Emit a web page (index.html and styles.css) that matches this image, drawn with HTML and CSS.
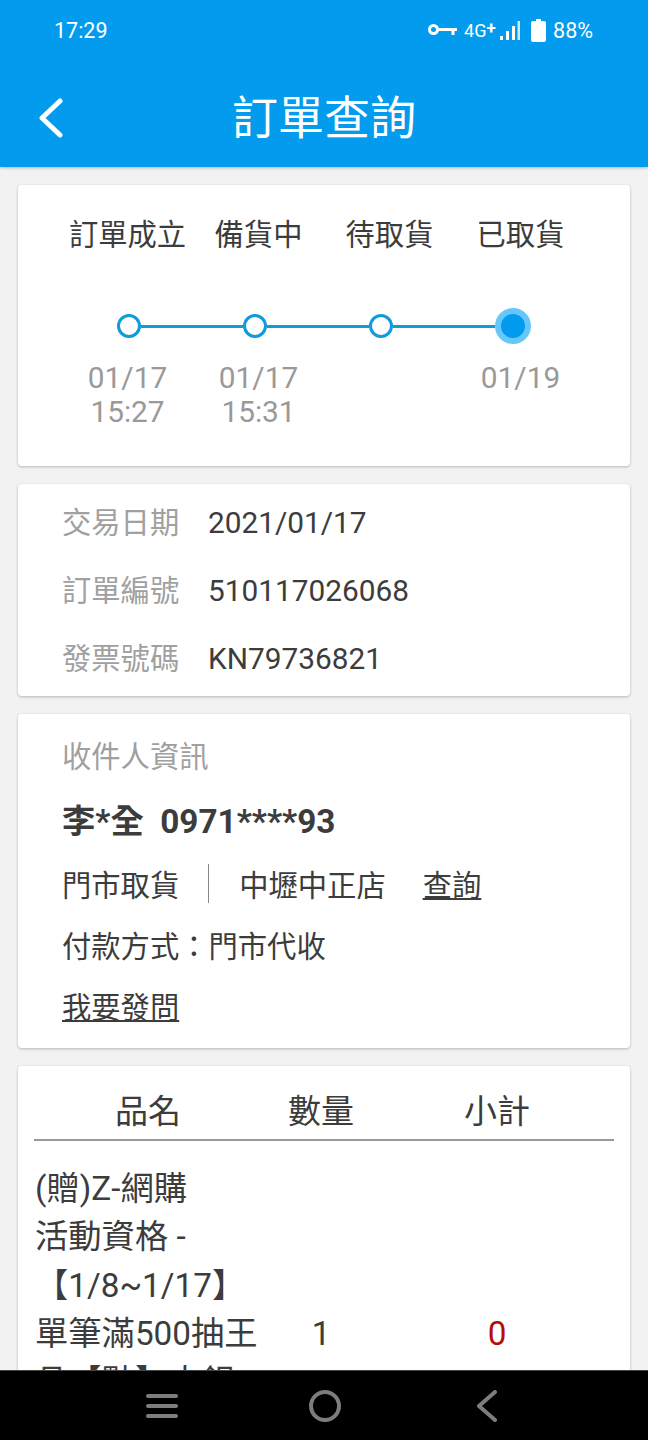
FILE: index.html
```html
<!DOCTYPE html>
<html lang="zh-Hant">
<head>
<meta charset="utf-8">
<title>訂單查詢</title>
<link rel="stylesheet" href="styles.css">
</head>
<body>
<header class="appbar">
  <div class="status">
    <span class="clock">17:29</span>
    <div class="status-right">
      <svg class="key" viewBox="0 0 29 12" width="29" height="12"><circle cx="5.500" cy="5.500" r="4" fill="none" stroke="#fff" stroke-width="3"/><path d="M9.500 4H29V7H26.500V11H23.500V7H9.500Z" fill="#fff"/></svg>
      <span class="net">4G<b class="plus">+</b></span>
      <svg class="bars" viewBox="0 0 20 19" width="20" height="19"><rect x="0" y="15" width="3" height="4" fill="#fff"/><rect x="6" y="10" width="3" height="9" fill="#fff"/><rect x="12" y="5" width="3" height="14" fill="#fff"/><rect x="17.500" y="0" width="2.500" height="19" fill="#cfe9fb"/></svg>
      <svg class="batt" viewBox="0 0 15 23" width="15" height="23"><path d="M5 0H10V2H13Q15 2 15 4V21Q15 23 13 23H2Q0 23 0 21V4Q0 2 2 2H5Z" fill="#fff"/></svg>
      <span class="pct">88%</span>
    </div>
  </div>
  <div class="titlebar">
    <svg class="back" viewBox="0 0 26 40" width="26" height="40"><path d="M22 3L4 20L22 37" fill="none" stroke="#fff" stroke-width="5" stroke-linecap="round" stroke-linejoin="round"/></svg>
    <h1 class="title">訂單查詢</h1>
  </div>
</header>

<main class="content">
  <section class="card progress">
    <div class="steps">
      <span class="step">訂單成立</span>
      <span class="step">備貨中</span>
      <span class="step">待取貨</span>
      <span class="step">已取貨</span>
    </div>
    <div class="track">
      <span class="dot"></span>
      <span class="link"></span>
      <span class="dot"></span>
      <span class="link"></span>
      <span class="dot"></span>
      <span class="link"></span>
      <span class="dot dot-active"></span>
    </div>
    <div class="dates">
      <span class="date">01/17<br>15:27</span>
      <span class="date">01/17<br>15:31</span>
      <span class="date"></span>
      <span class="date">01/19</span>
    </div>
  </section>

  <section class="card info">
    <div class="info-row"><span class="label">交易日期</span><span class="latin">2021/01/17</span></div>
    <div class="info-row"><span class="label">訂單編號</span><span class="latin">510117026068</span></div>
    <div class="info-row"><span class="label">發票號碼</span><span class="latin">KN79736821</span></div>
  </section>

  <section class="card receiver">
    <div class="label">收件人資訊</div>
    <div class="name">李*全&nbsp; 0971****93</div>
    <div class="pickup">
      <span class="pickup-type">門市取貨</span>
      <span class="pickup-sep"></span>
      <span class="pickup-store">中壢中正店</span>
      <a class="link-text pickup-link">查詢</a>
    </div>
    <div class="pay">付款方式：門市代收</div>
    <div class="ask"><a class="link-text">我要發問</a></div>
  </section>

  <section class="card items">
    <div class="items-head">
      <span class="col-name">品名</span>
      <span class="col-qty">數量</span>
      <span class="col-sum">小計</span>
    </div>
    <div class="item">
      <span class="col-name item-name">(贈)Z-網購<br>活動資格 -<br>【1/8~1/17】<br>單筆滿500抽王<br>品【點】大銀</span>
      <span class="col-qty item-qty">1</span>
      <span class="col-sum item-sum">0</span>
    </div>
  </section>
</main>

<nav class="navbar">
  <svg class="nav-menu" viewBox="0 0 32 26" width="32" height="26"><path d="M2 3H30M2 13H30M2 23H30" stroke="#7d7d7d" stroke-width="4" stroke-linecap="round"/></svg>
  <svg class="nav-home" viewBox="0 0 32 32" width="32" height="32"><circle cx="16" cy="16" r="14" fill="none" stroke="#7d7d7d" stroke-width="4"/></svg>
  <svg class="nav-back" viewBox="0 0 20 32" width="20" height="32"><path d="M18 2L2 16L18 30" fill="none" stroke="#7d7d7d" stroke-width="4" stroke-linecap="round" stroke-linejoin="round"/></svg>
</nav>
</body>
</html>
```
FILE: styles.css
```css
* { box-sizing: border-box; }
html, body { margin: 0; padding: 0; }
body {
  width: 648px;
  height: 1440px;
  overflow: hidden;
  background: #f2f2f2;
  color: #3c3c3c;
  font-family: Roboto, "Noto Sans CJK TC", sans-serif;
  font-size: 29.3px;
  position: relative;
}
.latin { font-size: 29.8px; }
.appbar {
  height: 167px;
  background: #039bee;
  color: #fff;
  box-shadow: 0 1px 3px rgba(0,0,0,.25);
  padding: 0 54px;
  position: relative;
  z-index: 1;
}
.status {
  height: 60px;
  display: flex;
  align-items: center;
  justify-content: space-between;
  font-size: 21.5px;
  padding-right: 1px;
}
.status-right { display: flex; align-items: center; }
.key { margin-right: 7px; }
.net { font-size: 18px; width: 36px; white-space: nowrap; }
.plus { font-size: 17px; position: relative; top: -3px; }
.bars { margin-right: 11px; }
.batt { margin-right: 7px; }
.titlebar {
  height: 107px;
  position: relative;
  display: flex;
  align-items: center;
  justify-content: center;
  padding-top: 9px;
}
.back { position: absolute; left: -16px; top: 38px; }
.title {
  margin: 0;
  font-size: 46px;
  font-weight: 400;
  line-height: 60px;
}
.content {
  height: 1273px;
  overflow: hidden;
  padding: 18px 18px 0;
  display: flex;
  flex-direction: column;
  gap: 18px;
}
.card {
  flex: none;
  background: #fff;
  border-radius: 4px;
  box-shadow: 0 1px 3px rgba(0,0,0,.25);
}
.progress { height: 281px; padding-top: 28px; }
.steps, .dates {
  display: grid;
  grid-template-columns: 131px 131px 131px 131px;
  margin-left: 44px;
  text-align: center;
}
.step { line-height: 44px; white-space: nowrap; }
.track {
  display: flex;
  align-items: center;
  margin: 51px 0 0 99px;
  height: 36px;
}
.dot {
  width: 24px;
  height: 24px;
  border: 3px solid #0f9bdc;
  border-radius: 50%;
  background: #fff;
  flex: none;
}
.link { width: 102px; height: 3px; background: #0f9bdc; flex: none; }
.dot-active {
  width: 36px;
  height: 36px;
  border: 6px solid #66c8fa;
  background: #039bee;
}
.dates { margin-top: 17px; color: #999; line-height: 34px; font-size: 29.8px; }
.info { height: 212px; padding: 17px 44px 0; }
.info-row { display: flex; height: 68px; line-height: 44px; }
.label { color: #a0a0a0; }
.info-row .label { width: 146px; }
.receiver { height: 334px; padding: 21px 44px 0; line-height: 44px; }
.name { font-weight: 700; font-size: 33.3px; margin-top: 21px; }
.pickup { display: flex; align-items: center; margin-top: 20px; }
.pickup-type { margin-right: 29px; }
.pickup-sep { width: 1px; height: 39px; margin-bottom: 5px; background: #888; flex: none; }
.pickup-store { margin-left: 30px; }
.pickup-link { margin-left: 37px; }
.pay { margin-top: 17px; }
.ask { margin-top: 17px; }
.link-text { text-decoration: underline; }
.items { padding: 0 16px; height: 500px; }
.items-head {
  display: flex;
  height: 75px;
  align-items: center;
  border-bottom: 2px solid #999;
  font-size: 33px;
  padding-top: 12px;
}
.col-name { width: 228px; flex: none; text-align: center; }
.col-qty { width: 118px; flex: none; text-align: center; }
.col-sum { width: 234px; flex: none; text-align: center; }
.item {
  display: flex;
  align-items: center;
  font-size: 33.3px;
  line-height: 48.300px;
  margin-top: 24px;
  min-height: 338px;
}
.item-name { text-align: left; padding-left: 1px; align-self: flex-start; white-space: nowrap; }
.item-sum { color: #b80c0c; }
.navbar {
  position: absolute;
  left: 0;
  right: 0;
  top: 1370px;
  height: 70px;
  background: #000;
  border-top: 1px solid #444;
  display: flex;
  align-items: center;
  padding-left: 146px;
}
.nav-home { margin-left: 131px; }
.nav-back { margin-left: 136px; }
```
